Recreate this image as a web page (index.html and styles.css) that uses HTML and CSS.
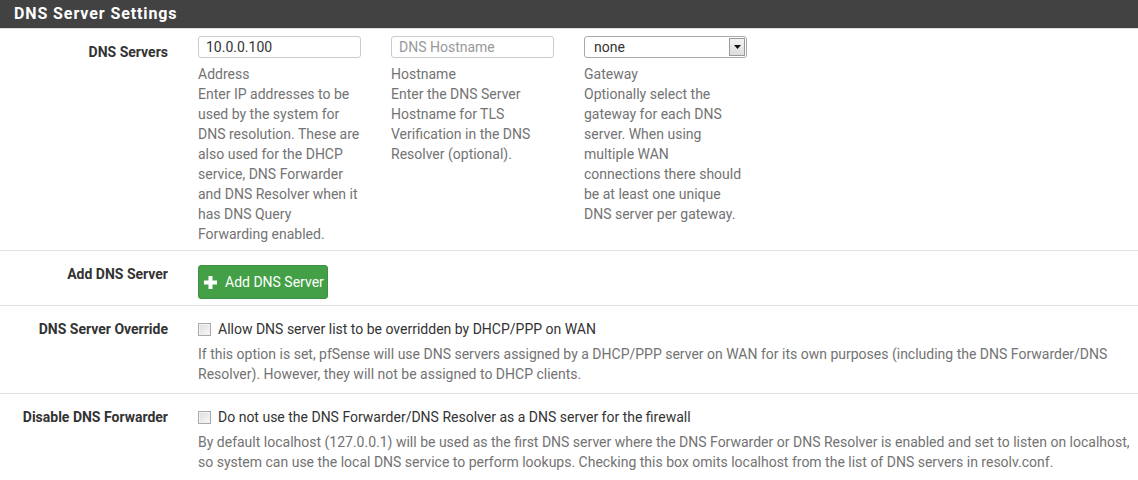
FILE: index.html
```html
<!DOCTYPE html>
<html>
<head>
<meta charset="utf-8">
<link rel="stylesheet" href="styles.css">
</head>
<body>
<div class="panel">
  <div class="panel-heading">DNS Server Settings</div>

  <div class="row row-servers">
    <div class="label">DNS Servers</div>
    <div class="content cols">
      <div class="col">
        <input class="field" type="text" value="10.0.0.100">
        <div class="help">Address<br>Enter IP addresses to be used by the system for DNS resolution. These are also used for the DHCP service, DNS Forwarder and DNS Resolver when it has DNS Query Forwarding enabled.</div>
      </div>
      <div class="col">
        <input class="field" type="text" placeholder="DNS Hostname">
        <div class="help">Hostname<br>Enter the DNS Server Hostname for TLS Verification in the DNS Resolver (optional).</div>
      </div>
      <div class="col">
        <div class="select">
          <span class="select-value">none</span>
          <span class="select-arrow"><svg width="7" height="4" viewBox="0 0 7 4"><path d="M0 0H7L3.5 4Z" fill="#111"/></svg></span>
        </div>
        <div class="help">Gateway<br>Optionally select the gateway for each DNS server. When using multiple WAN connections there should be at least one unique DNS server per gateway.</div>
      </div>
    </div>
  </div>

  <div class="row row-add">
    <div class="label">Add DNS Server</div>
    <div class="content">
      <button class="btn-add"><svg class="plus" width="13" height="13" viewBox="0 0 13 13"><path d="M4.5 0H8.5V4.5H13V8.5H8.5V13H4.5V8.5H0V4.5H4.5Z" fill="#fff"/></svg>Add DNS Server</button>
    </div>
  </div>

  <div class="row row-check">
    <div class="label">DNS Server Override</div>
    <div class="content">
      <div class="check"><span class="box"></span>Allow DNS server list to be overridden by DHCP/PPP on WAN</div>
      <div class="help">If this option is set, pfSense will use DNS servers assigned by a DHCP/PPP server on WAN for its own purposes (including the DNS Forwarder/DNS<br>Resolver). However, they will not be assigned to DHCP clients.</div>
    </div>
  </div>

  <div class="row row-check last">
    <div class="label">Disable DNS Forwarder</div>
    <div class="content">
      <div class="check"><span class="box"></span>Do not use the DNS Forwarder/DNS Resolver as a DNS server for the firewall</div>
      <div class="help">By default localhost (127.0.0.1) will be used as the first DNS server where the DNS Forwarder or DNS Resolver is enabled and set to listen on localhost,<br>so system can use the local DNS service to perform lookups. Checking this box omits localhost from the list of DNS servers in resolv.conf.</div>
    </div>
  </div>
</div>
</body>
</html>
```

FILE: styles.css
```css
* { box-sizing: border-box; }
html, body { margin: 0; padding: 0; background: #fff; }
body {
  font-family: Roboto, "Liberation Sans", sans-serif;
  font-size: 14px;
  line-height: 20px;
  color: #333;
  width: 1138px;
  height: 480px;
  overflow: hidden;
}
.panel { width: 1138px; }
.panel-heading {
  background: #424242;
  color: #fff;
  font-weight: bold;
  font-size: 16px;
  letter-spacing: 0.9px;
  height: 29px;
  line-height: 28px;
  padding-left: 14px;
  border-bottom: 1px solid #ddd;
}
.row {
  display: flex;
  border-bottom: 1px solid #e0e0e0;
}
.row.last { border-bottom: none; }
.label {
  width: 168px;
  flex: none;
  text-align: right;
  font-weight: bold;
  color: #333;
  margin-top: 13px;
}
.content {
  margin-left: 30px;
  flex: 1;
}
.cols { display: flex; gap: 30px; }
.col { width: 163px; }

.row-servers { padding-bottom: 6px; }
.row-servers .content { padding-top: 7px; }
.row-servers .help { margin-top: 6px; }
.field {
  display: block;
  width: 163px;
  height: 22px;
  border: 1px solid #ccc;
  border-radius: 3px;
  padding: 0 7px;
  font-family: inherit;
  font-size: 14px;
  color: #333;
  outline: none;
}
.field::placeholder { color: #999; }
.help {
  color: #737373;
  margin-top: 5px;
}
.select {
  position: relative;
  width: 163px;
  height: 22px;
  border: 1px solid #aaa;
  border-radius: 3px;
  padding-left: 9px;
  line-height: 20px;
  color: #333;
}
.select-arrow {
  position: absolute;
  right: 1px;
  top: 1px;
  width: 16px;
  height: 18px;
  border: 1px solid #999;
  background: linear-gradient(#f4f4f4, #dcdcdc);
  display: flex;
  align-items: center;
  justify-content: center;
}

.row-add { padding-bottom: 6px; }
.row-add .content { padding-top: 14px; }
.btn-add {
  display: flex;
  align-items: center;
  height: 34px;
  width: 130px;
  background: #43a047;
  border: 1px solid #3d9141;
  border-radius: 3px;
  color: #fff;
  font-family: inherit;
  font-size: 14px;
  padding: 0 0 0 5px;
}
.plus { margin-right: 8px; }

.row-check { padding-bottom: 9px; }
.row-check .content { padding-top: 13px; }
.check {
  display: flex;
  align-items: center;
  color: #333;
}
.box {
  width: 13px;
  height: 13px;
  border: 1px solid #aaa;
  background: linear-gradient(135deg, #dedede, #f8f8f8);
  box-shadow: inset 0 0 0 1px #f2f2f2;
  margin-right: 7px;
}
```
